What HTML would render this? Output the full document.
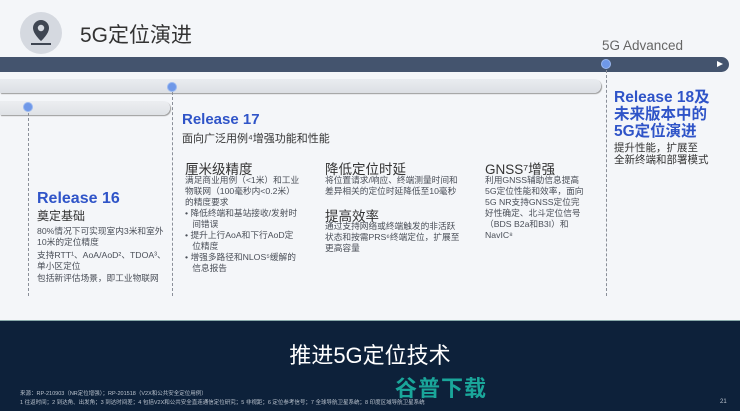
<!DOCTYPE html>
<html><head><meta charset="utf-8"><style>
*{margin:0;padding:0;box-sizing:border-box}
body{width:740px;height:411px;overflow:hidden;background:#f4f6f9;font-family:"Liberation Sans","Noto Sans CJK SC",sans-serif;position:relative;color:#333}
.a{position:absolute;white-space:nowrap}
.blue{color:#2f54c8;font-weight:bold}
.h{font-size:13.5px;color:#333}
.t{font-size:8.7px;line-height:11px;color:#4a4f58}
.dash{position:absolute;width:0;border-left:1px dashed #8a8f99}
.dot{position:absolute;width:10px;height:10px;border-radius:50%;background:#6f98e8;border:1px solid #9ab8f0}
</style></head><body>
<div class="a" style="left:20px;top:12px;width:42px;height:42px;border-radius:50%;background:#d5d9e0"></div>
<svg class="a" style="left:28px;top:17px" width="26" height="30" viewBox="0 0 26 30"><path d="M13 3a8 8 0 0 0-8 8c0 6 8 13 8 13s8-7 8-13a8 8 0 0 0-8-8z" fill="#3f4652"/><circle cx="13" cy="11" r="3.2" fill="#d5d9e0"/><rect x="3" y="26" width="20" height="2" fill="#3f4652"/></svg>
<div class="a" style="left:80px;top:19px;font-size:21px;color:#333">5G定位演进</div>
<div class="a" style="left:602px;top:38px;font-size:13.5px;color:#666">5G Advanced</div>
<div class="a" style="left:0;top:57px;width:729px;height:15px;background:#44546e;border-radius:0 8px 8px 0"></div>
<div class="a" style="left:717px;top:61px;width:0;height:0;border-left:6px solid #fff;border-top:3.5px solid transparent;border-bottom:3.5px solid transparent"></div>
<div class="a" style="left:0;top:79px;width:601px;height:14px;background:linear-gradient(#e9ecf0,#dcdfe4);border-radius:0 7px 7px 0;box-shadow:1px 1px 1px #999"></div>
<div class="a" style="left:0;top:101px;width:170px;height:14px;background:linear-gradient(#eceef1,#dfe2e6);border-radius:0 7px 7px 0;box-shadow:1px 1px 1px #999"></div>
<div class="dash" style="left:28px;top:113px;height:183px"></div>
<div class="dash" style="left:172px;top:92px;height:204px"></div>
<div class="dash" style="left:606px;top:70px;height:226px"></div>
<div class="dot" style="left:167px;top:82px"></div>
<div class="dot" style="left:23px;top:102px"></div>
<div class="dot" style="left:601px;top:59px"></div>
<div class="a blue" style="left:182px;top:111px;font-size:15px">Release 17</div>
<div class="a" style="left:182px;top:130px;font-size:11px;color:#333">面向广泛用例⁴增强功能和性能</div>
<div class="a h" style="left:185px;top:158px">厘米级精度</div>
<div class="a t" style="left:185px;top:175px">满足商业用例（&lt;1米）和工业<br>物联网（100毫秒内&lt;0.2米）<br>的精度要求<br>• 降低终端和基站接收/发射时<br>&nbsp;&nbsp;&nbsp;间错误<br>• 提升上行AoA和下行AoD定<br>&nbsp;&nbsp;&nbsp;位精度<br>• 增强多路径和NLOS⁵缓解的<br>&nbsp;&nbsp;&nbsp;信息报告</div>
<div class="a blue" style="left:37px;top:190px;font-size:16px">Release 16</div>
<div class="a" style="left:37px;top:207px;font-size:12px;color:#333">奠定基础</div>
<div class="a t" style="left:37px;top:226px">80%情况下可实现室内3米和室外<br>10米的定位精度</div>
<div class="a t" style="left:37px;top:250px">支持RTT¹、AoA/AoD²、TDOA³、<br>单小区定位</div>
<div class="a t" style="left:37px;top:273px">包括新评估场景，即工业物联网</div>
<div class="a h" style="left:325px;top:158px">降低定位时延</div>
<div class="a t" style="left:325px;top:175px">将位置请求/响应、终端测量时间和<br>差异相关的定位时延降低至10毫秒</div>
<div class="a h" style="left:325px;top:205px">提高效率</div>
<div class="a t" style="left:325px;top:221px">通过支持网络或终端触发的非活跃<br>状态和按需PRS⁶终端定位，扩展至<br>更高容量</div>
<div class="a h" style="left:485px;top:158px">GNSS⁷增强</div>
<div class="a t" style="left:485px;top:175px">利用GNSS辅助信息提高<br>5G定位性能和效率，面向<br>5G NR支持GNSS定位完<br>好性确定、北斗定位信号<br>（BDS B2a和B3I）和<br>NavIC⁸</div>
<div class="a blue" style="left:614px;top:89px;font-size:15.5px;line-height:17px">Release 18及<br>未来版本中的<br>5G定位演进</div>
<div class="a" style="left:614px;top:142px;font-size:10.5px;line-height:12px;color:#333">提升性能，扩展至<br>全新终端和部署模式</div>
<div class="a" style="left:0;top:320px;width:740px;height:91px;background:#0d213a;border-top:1px solid #8aa"></div>
<div class="a" style="left:0;top:338px;width:740px;text-align:center;font-size:22px;color:#fff">推进5G定位技术</div>
<div class="a" style="left:20px;top:390px;font-size:5.5px;color:#bcc4cf;line-height:9px">来源：RP-210903（NR定位增强）；RP-201518（V2X和公共安全定位用例）<br>1 往返时间；2 到达角、出发角；3 到达时间差；4 包括V2X和公共安全直连通信定位研究；5 非视距；6 定位参考信号；7 全球导航卫星系统；8 印度区域导航卫星系统</div>
<div class="a" style="left:395px;top:371px;font-size:22px;font-weight:bold;color:#1aa69a;letter-spacing:1px">谷普下载</div>
<div class="a" style="left:720px;top:399px;font-size:6px;color:#bcc4cf">21</div>
</body></html>
